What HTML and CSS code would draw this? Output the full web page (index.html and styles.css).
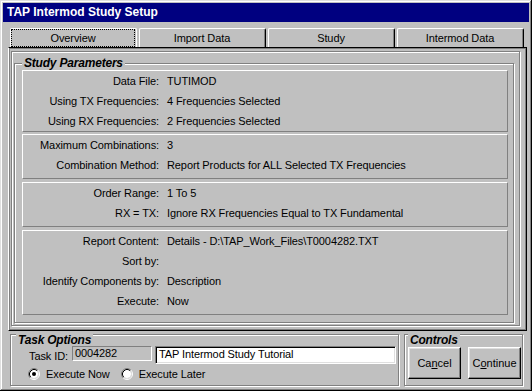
FILE: index.html
```html
<!DOCTYPE html>
<html lang="en">
<head>
  <meta charset="UTF-8" />
  <title>TAP Intermod Study Setup</title>
  <link rel="stylesheet" href="styles.css">
</head>
<body>
  <div class="window">
    <div class="titlebar">TAP Intermod Study Setup</div>

    <div class="tabs">
      <div class="tab active"><span>Overview</span></div>
      <div class="tab"><span>Import Data</span></div>
      <div class="tab"><span>Study</span></div>
      <div class="tab"><span>Intermod Data</span></div>
    </div>

    <div class="tabpage">
      <div class="frame">
        <div class="group study">
          <div class="group-title">Study Parameters</div>

          <div class="panel first">
            <div class="row"><span class="label">Data File:</span><span class="value">TUTIMOD</span></div>
            <div class="row"><span class="label">Using TX Frequencies:</span><span class="value">4 Frequencies Selected</span></div>
            <div class="row"><span class="label">Using RX Frequencies:</span><span class="value">2 Frequencies Selected</span></div>
          </div>

          <div class="panel">
            <div class="row"><span class="label">Maximum Combinations:</span><span class="value">3</span></div>
            <div class="row"><span class="label">Combination Method:</span><span class="value">Report Products for ALL Selected TX Frequencies</span></div>
          </div>

          <div class="panel">
            <div class="row"><span class="label">Order Range:</span><span class="value">1 To 5</span></div>
            <div class="row"><span class="label">RX = TX:</span><span class="value">Ignore RX Frequencies Equal to TX Fundamental</span></div>
          </div>

          <div class="panel">
            <div class="row"><span class="label">Report Content:</span><span class="value">Details - D:\TAP_Work_Files\T0004282.TXT</span></div>
            <div class="row"><span class="label">Sort by:</span><span class="value"></span></div>
            <div class="row"><span class="label">Identify Components by:</span><span class="value">Description</span></div>
            <div class="row"><span class="label">Execute:</span><span class="value">Now</span></div>
          </div>
        </div>
      </div>
    </div>

    <div class="bottom">
      <div class="group task">
        <div class="group-title">Task Options</div>
        <div class="task-row">
          <span class="task-label">Task ID:</span>
          <div class="field readonly">0004282</div>
          <div class="field text">TAP Intermod Study Tutorial</div>
        </div>
        <div class="radio-row">
          <label class="radio">
            <svg width="12" height="12" viewBox="0 0 12 12">
              <circle cx="6" cy="6" r="4" fill="#fff"/>
              <path d="M2.11 9.89 A5.5 5.5 0 0 1 9.89 2.11" stroke="#808080" fill="none"/>
              <path d="M9.89 2.11 A5.5 5.5 0 0 1 2.11 9.89" stroke="#fff" fill="none"/>
              <path d="M2.82 9.18 A4.5 4.5 0 0 1 9.18 2.82" stroke="#000" fill="none"/>
              <path d="M9.18 2.82 A4.5 4.5 0 0 1 2.82 9.18" stroke="#dfdfdf" fill="none"/>
              <circle cx="6" cy="6" r="2" fill="#000"/>
            </svg>
            Execute Now
          </label>
          <label class="radio">
            <svg width="12" height="12" viewBox="0 0 12 12">
              <circle cx="6" cy="6" r="4" fill="#fff"/>
              <path d="M2.11 9.89 A5.5 5.5 0 0 1 9.89 2.11" stroke="#808080" fill="none"/>
              <path d="M9.89 2.11 A5.5 5.5 0 0 1 2.11 9.89" stroke="#fff" fill="none"/>
              <path d="M2.82 9.18 A4.5 4.5 0 0 1 9.18 2.82" stroke="#000" fill="none"/>
              <path d="M9.18 2.82 A4.5 4.5 0 0 1 2.82 9.18" stroke="#dfdfdf" fill="none"/>
            </svg>
            Execute Later
          </label>
        </div>
      </div>

      <div class="group controls">
        <div class="group-title">Controls</div>
        <div class="buttons">
          <button>Ca<u>n</u>cel</button>
          <button>C<u>o</u>ntinue</button>
        </div>
      </div>
    </div>
  </div>
</body>
</html>
```

FILE: styles.css
```css
* {
  box-sizing: border-box;
  margin: 0;
  padding: 0;
}
body {
  font-family: 'Liberation Sans', Arial, sans-serif;
  font-size: 11px;
  letter-spacing: -0.1px;
  color: #000;
  background: #c0c0c0;
}
.window {
  width: 532px;
  height: 391px;
  padding: 3px;
  background: #c0c0c0;
  box-shadow: inset -1px -1px #000, inset 1px 1px #dfdfdf, inset -2px -2px #808080, inset 2px 2px #fff;
}
.titlebar {
  height: 19px;
  line-height: 19px;
  padding-left: 4px;
  background: #000080;
  color: #fff;
  font-size: 12px;
  font-weight: bold;
  letter-spacing: 0;
}

/* tabs */
.tabs {
  display: flex;
  gap: 2px;
  margin: 6px 0 0 7px;
}
.tab {
  width: 127px;
  height: 19px;
  padding: 1px 2px 0 1px;
  text-align: center;
  border-top: 1px solid #fff;
  border-left: 1px solid #fff;
  border-right: 1px solid #000;
  border-radius: 2px 2px 0 0;
  box-shadow: inset -1px 0 #808080;
}
.tab span {
  display: block;
  height: 16px;
  line-height: 17px;
}
.tab.active {
  border-right-color: #fff;
  box-shadow: none;
}
.tab.active span {
  outline: 1px dotted #000;
}

.tabpage {
  width: 519px;
  height: 284px;
  margin-left: 5px;
  padding: 2px;
  border-top: 1px solid #000;
  border-left: 1px solid #fff;
  border-right: 1px solid #000;
  border-bottom: 1px solid #000;
  box-shadow: inset -1px -1px #808080, inset 1px 1px #808080;
}
.frame {
  height: 275px;
  margin: 1px 4px 0 0;
  padding: 0 0 0 2px;
  border: 1px solid #808080;
  box-shadow: inset 1px 1px #fff, 1px 1px #fff;
}

/* group boxes */
.group {
  border: 1px solid #808080;
  box-shadow: inset 1px 1px #fff, 1px 1px #fff;
}
.group-title {
  width: fit-content;
  padding: 0 2px;
  background: #c0c0c0;
  font-size: 12px;
  font-weight: bold;
  font-style: italic;
  line-height: 13px;
  letter-spacing: -0.2px;
}
.study {
  width: 500px;
  margin-top: 11px;
  padding: 0 5px 7px 7px;
}
.study .group-title {
  margin-top: -7px;
}

.panel {
  margin-top: 3px;
  padding-bottom: 3px;
  border: 1px solid;
  border-color: #fff #808080 #808080 #fff;
}
.panel.first {
  margin-top: 0;
  padding-bottom: 0;
}
.panel.first + .panel {
  margin-top: 2px;
}
.row {
  display: flex;
  height: 20px;
  line-height: 20px;
}
.label {
  width: 136px;
  text-align: right;
}
.value {
  margin-left: 8px;
}

/* bottom area */
.bottom {
  display: flex;
  gap: 5px;
  margin: 3px 0 0 7px;
}
.task {
  width: 389px;
  padding: 0 0 4px 5px;
}
.task .group-title,
.controls .group-title {
  margin-top: -1px;
}
.task-row {
  display: flex;
  align-items: flex-start;
  margin: -1px 0 0 13px;
}
.task-label {
  margin-top: 4px;
  width: 43px;
  line-height: 13px;
}
.field {
  line-height: 13px;
  white-space: nowrap;
}
.field.readonly {
  width: 80px;
  height: 15px;
  padding-left: 2px;
  border: 1px solid;
  border-color: #808080 #fff #fff #808080;
}
.field.text {
  width: 241px;
  height: 18px;
  margin-left: 3px;
  padding: 1px 0 0 3px;
  background: #fff;
  border: 1px solid;
  border-color: #808080 #fff #fff #808080;
  box-shadow: inset 1px 1px #000, inset -1px -1px #dfdfdf;
}
.radio-row {
  display: flex;
  gap: 11px;
  margin: 3px 0 0 12px;
}
.radio {
  display: flex;
  align-items: center;
  gap: 6px;
  height: 14px;
}
.controls {
  width: 119px;
  padding: 0 1px 4px 3px;
}
.buttons {
  display: flex;
  justify-content: space-between;
}
button {
  width: 53px;
  height: 32px;
  font-family: inherit;
  font-size: 11px;
  color: #000;
  background: #c0c0c0;
  border: 1px solid;
  border-color: #fff #000 #000 #fff;
  box-shadow: inset -1px -1px #808080, inset 1px 1px #dfdfdf;
}
```
